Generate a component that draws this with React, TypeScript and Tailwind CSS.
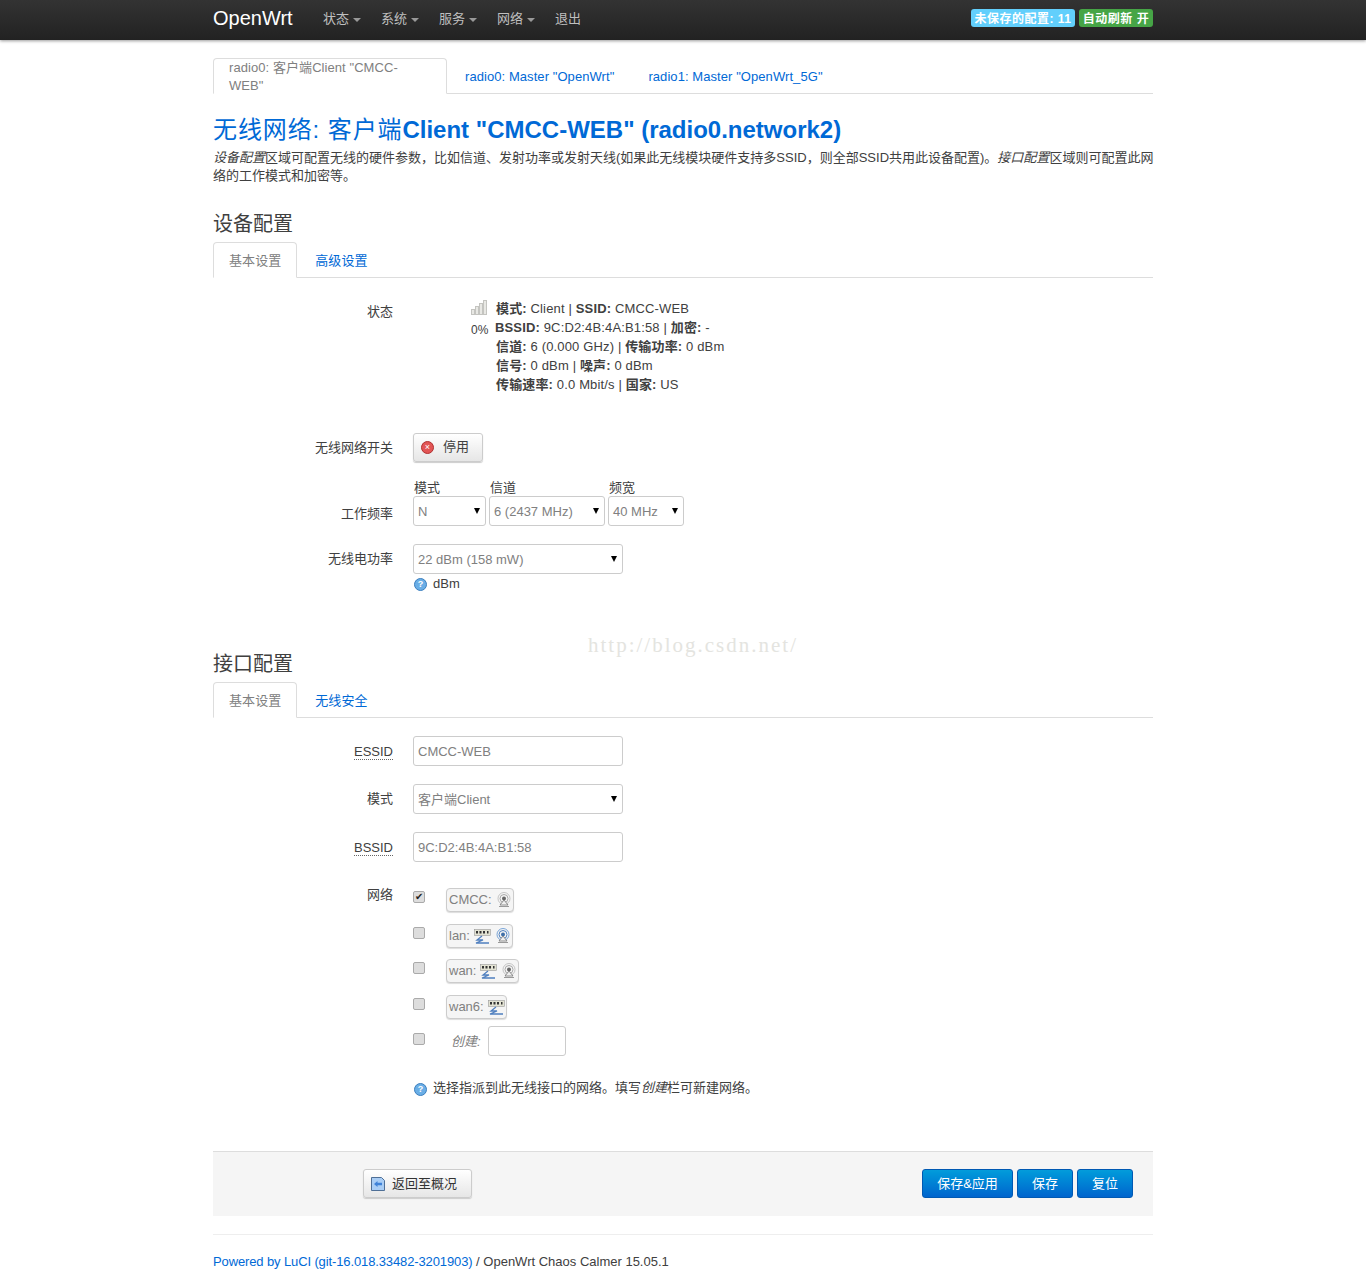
import type { ReactNode } from "react";

const FONT = "font-['Liberation_Sans','Noto_Sans_CJK_SC',sans-serif]";

function WifiIcon({ active }: { active?: boolean }) {
  const c = active ? "#7aa5d8" : "#c4c4c4";
  return (
    <svg width="16" height="16" viewBox="0 0 16 16" fill="none">
      <circle cx="8" cy="6.5" r="6" stroke={c} strokeWidth="1" />
      <circle cx="8" cy="6.5" r="4" stroke={active ? "#4f82c0" : "#a8a8a8"} strokeWidth="1" />
      <circle cx="8" cy="6.5" r="2" fill={active ? "#3f6fa8" : "#666"} />
      <path d="M8 8 L4 13 H12 Z" fill="#f0f0f0" stroke="#777" strokeWidth="0.8" />
      <path d="M3 14.5 H13" stroke="#999" strokeWidth="1" />
    </svg>
  );
}

function NetIcon() {
  return (
    <svg width="17" height="16" viewBox="0 0 17 16" fill="none">
      <rect x="0.5" y="1.5" width="16" height="6" fill="#e2e2d2" stroke="#999" strokeWidth="0.6" />
      <rect x="2" y="3" width="2" height="2.5" fill="#333" />
      <rect x="5.5" y="3" width="2" height="2.5" fill="#333" />
      <rect x="9" y="3" width="2" height="2.5" fill="#333" />
      <rect x="13" y="3" width="1.5" height="2.5" fill="#333" />
      <path d="M8 8 L3 12 H9 L2 15 H15" stroke="#4f7fbf" strokeWidth="1.3" />
    </svg>
  );
}

function HelpIcon() {
  return (
    <span className="flex h-[13px] w-[13px] shrink-0 items-center justify-center rounded-full border border-[#3b7fbf] bg-[#6aaee6] text-[9px] font-bold leading-none text-white">
      ?
    </span>
  );
}

function SignalIcon() {
  return (
    <svg width="17" height="15" viewBox="0 0 17 15" fill="none">
      <rect x="0.5" y="9.5" width="3" height="5" fill="#e8e8e4" stroke="#c4c4c0" />
      <rect x="4.5" y="6.5" width="3" height="8" fill="#e8e8e4" stroke="#c4c4c0" />
      <rect x="8.5" y="3.5" width="3" height="11" fill="#e8e8e4" stroke="#c4c4c0" />
      <rect x="12.5" y="0.5" width="3" height="14" fill="#e8e8e4" stroke="#c4c4c0" />
    </svg>
  );
}

function Caret() {
  return <span className="ml-1 mt-[2px] h-0 w-0 border-x-4 border-t-4 border-x-transparent border-t-[#999]" />;
}

function Tabs({ items, firstWidth }: { items: string[]; firstWidth?: string }) {
  return (
    <div className="flex h-[36px] border-b border-[#ddd] tracking-[0.07px]">
      {items.map((t, i) =>
        i === 0 ? (
          <div
            key={t}
            className={`-mb-px flex h-[36px] items-center rounded-t border border-[#ddd] border-b-white bg-white px-[15px] pt-[2px] text-[#808080] ${firstWidth ?? ""}`}
          >
            {t}
          </div>
        ) : (
          <div key={t} className="ml-[2px] flex items-center px-4 pt-[2px] text-[#0069d6]">
            {t}
          </div>
        ),
      )}
    </div>
  );
}

function Row({ label, className, children }: { label: ReactNode; className?: string; children: ReactNode }) {
  return (
    <div className={`flex ${className ?? ""}`}>
      <div className="w-[180px] shrink-0 text-right">{label}</div>
      <div className="ml-[20px] min-w-0 flex-1">{children}</div>
    </div>
  );
}

function FakeSelect({ value, className }: { value: string; className: string }) {
  return (
    <div
      className={`flex h-[30px] items-center justify-between rounded-[3px] border border-[#ccc] bg-white pl-1 pr-[5px] text-[#808080] ${className}`}
    >
      <span className="relative top-px">{value}</span>
      <span className="h-0 w-0 border-x-[3.5px] border-t-[6px] border-x-transparent border-t-black" />
    </div>
  );
}

function TextBox({ value }: { value: string }) {
  return (
    <input
      readOnly
      value={value}
      className="block h-[30px] w-[210px] rounded-[3px] border border-[#ccc] bg-white px-1 text-[#808080]"
    />
  );
}

function Check({ on }: { on?: boolean }) {
  return (
    <span className="flex h-[12px] w-[12px] items-center justify-center rounded-[2px] border border-[#aaa] bg-[#ddd] text-[10px] leading-none text-[#222]">
      {on ? "✔" : ""}
    </span>
  );
}

function NetLabel({ name, children, className }: { name: string; children: ReactNode; className?: string }) {
  return (
    <div className={`flex items-start ${className ?? ""}`}>
      <div className="mt-[3px]">
        <Check on={name === "CMCC"} />
      </div>
      <div className="ml-[21px] flex h-[24px] items-center gap-[4px] rounded-[4px] border border-[#ccc] bg-[#f5f5f5] pl-[2px] pr-px text-[#808080] shadow-[0_1px_1px_#ddd]">
        <span className="-mt-px">{name}:</span>
        {children}
      </div>
    </div>
  );
}

function BlueButton({ children, className }: { children: ReactNode; className: string }) {
  return (
    <div
      className={`flex h-[29px] items-center justify-center rounded-[3px] border border-[#0059b3] bg-gradient-to-b from-[#049cdb] to-[#0064cd] text-white ${className}`}
    >
      {children}
    </div>
  );
}

export default function App() {
  return (
    <div className={`${FONT} relative min-h-[1275px] bg-white text-[13px] leading-[18px] text-[#404040]`}>
      {/* Top bar */}
      <div className="h-[40px] bg-gradient-to-b from-[#333] to-[#222] shadow-[0_1px_3px_rgba(0,0,0,0.4)]">
        <div className="mx-auto flex h-[40px] w-[940px] items-center">
          <div className="w-[110px] pb-[5px] text-xl text-white">OpenWrt</div>
          <nav className="flex gap-[20px] pb-[3px] text-[#bfbfbf]">
            {["状态", "系统", "服务", "网络"].map((t) => (
              <div key={t} className="flex w-[38px] items-center">
                {t}
                <Caret />
              </div>
            ))}
            <div>退出</div>
          </nav>
          <div className="ml-auto flex gap-1 pb-[4px] text-xs font-bold tracking-[0.5px] text-white">
            <span className="flex h-[18px] w-[104px] items-center justify-center rounded-[3px] bg-[#62cffc] pt-px">未保存的配置: 11</span>
            <span className="flex h-[18px] w-[74px] items-center justify-center rounded-[3px] bg-[#46a546] pt-px">自动刷新 开</span>
          </div>
        </div>
      </div>

      <div className="mx-auto w-[940px] pt-[18px]">
        <Tabs
          firstWidth="w-[234px]"
          items={['radio0: 客户端Client "CMCC-WEB"', 'radio0: Master "OpenWrt"', 'radio1: Master "OpenWrt_5G"']}
        />

        <h2 className="mt-[21px] text-2xl font-bold leading-[30px] text-[#0069d6]">
          <span className="font-normal tracking-[0.9px]">无线网络:&nbsp;客户端</span>Client "CMCC-WEB" (radio0.network2)
        </h2>
        <p className="-mr-[2px] mt-[4px]">
          <em>设备配置</em>区域可配置无线的硬件参数，比如信道、发射功率或发射天线(如果此无线模块硬件支持多SSID，则全部SSID共用此设备配置)。<em>接口配置</em>区域则可配置此网络的工作模式和加密等。
        </p>

        {/* Device config */}
        <h3 className="mt-[24px] text-xl leading-[30px]">设备配置</h3>
        <div className="mt-[3px]">
          <Tabs items={["基本设置", "高级设置"]} />
        </div>

        <Row label={<span className="relative top-[1px]">状态</span>} className="mt-[24px]">
          <div className="ml-[58px] flex">
            <div className="w-[25px] shrink-0 text-xs">
              <div className="-mt-[2px]">
                <SignalIcon />
              </div>
              <div className="mt-[7px]">0%</div>
            </div>
            <div className="-mt-[3px] leading-[19px] tracking-[0.15px]">
              <div><b>模式:</b> Client | <b>SSID:</b> CMCC-WEB</div>
              <div className="-ml-px"><b>BSSID:</b> 9C:D2:4B:4A:B1:58 | <b>加密:</b> -</div>
              <div><b>信道:</b> 6 (0.000 GHz) | <b>传输功率:</b> 0 dBm</div>
              <div><b>信号:</b> 0 dBm | <b>噪声:</b> 0 dBm</div>
              <div><b>传输速率:</b> 0.0 Mbit/s | <b>国家:</b> US</div>
            </div>
          </div>
        </Row>

        <Row label={<span className="relative top-[6px]">无线网络开关</span>} className="mt-[39px]">
          <div className="flex h-[29px] w-[70px] items-center rounded-[3px] border border-[#ccc] bg-gradient-to-b from-white to-[#e6e6e6] pb-px pl-[7px] shadow-[0_1px_1px_#ccc]">
            <span className="flex h-[13px] w-[13px] items-center justify-center rounded-full border border-[#b03030] bg-[#e25555] text-[9px] leading-none text-white">×</span>
            <span className="ml-[9px]">停用</span>
          </div>
        </Row>

        <Row label={<span className="relative top-[26px]">工作频率</span>} className="mt-[17px]">
          <div className="flex gap-[3px]">
            {[
              { l: "模式", v: "N", w: "w-[73px]" },
              { l: "信道", v: "6 (2437 MHz)", w: "w-[116px]" },
              { l: "频宽", v: "40 MHz", w: "w-[76px]" },
            ].map((s) => (
              <div key={s.l}>
                <div className="h-[17px] pl-px">{s.l}</div>
                <FakeSelect value={s.v} className={s.w} />
              </div>
            ))}
          </div>
        </Row>

        <Row label={<span className="relative top-[6px]">无线电功率</span>} className="mt-[18px]">
          <FakeSelect value="22 dBm (158 mW)" className="w-[210px]" />
          <div className="mt-[2px] flex items-center gap-[6px] pl-px">
            <HelpIcon />
            <span className="-mt-[1px]">dBm</span>
          </div>
        </Row>

        {/* Interface config */}
        <h3 className="mt-[56px] text-xl leading-[30px]">接口配置</h3>
        <div className="mt-[3px]">
          <Tabs items={["基本设置", "无线安全"]} />
        </div>

        <Row label={<span className="relative top-[7px] border-b border-dotted border-[#666]">ESSID</span>} className="mt-[18px]">
          <TextBox value="CMCC-WEB" />
        </Row>
        <Row label={<span className="relative top-[6px]">模式</span>} className="mt-[18px]">
          <FakeSelect value="客户端Client" className="w-[210px]" />
        </Row>
        <Row label={<span className="relative top-[7px] border-b border-dotted border-[#666]">BSSID</span>} className="mt-[18px]">
          <TextBox value="9C:D2:4B:4A:B1:58" />
        </Row>

        <Row label={<span className="relative top-[-2px]">网络</span>} className="mt-[26px]">
          <div className="flex flex-col gap-[12px]">
            <NetLabel name="CMCC"><WifiIcon /></NetLabel>
            <NetLabel name="lan"><NetIcon /><WifiIcon active /></NetLabel>
            <NetLabel name="wan" className="-mt-px"><NetIcon /><WifiIcon /></NetLabel>
            <NetLabel name="wan6"><NetIcon /></NetLabel>
            <div className="-mt-[5px] flex items-start">
              <div className="mt-[7px]"><Check /></div>
              <em className="ml-[26px] mt-[7px] w-[37px] text-[#808080]">创建:</em>
              <input readOnly className="block h-[30px] w-[78px] rounded-[3px] border border-[#ccc] bg-white" />
            </div>
          </div>
          <div className="mt-[25px] flex items-center gap-[6px] pl-px">
            <HelpIcon />
            <span className="-mt-[2px]">选择指派到此无线接口的网络。填写<em>创建</em>栏可新建网络。</span>
          </div>
        </Row>

        {/* Actions */}
        <div className="mt-[54px] flex h-[65px] items-center border-t border-[#ddd] bg-[#f5f5f5] pb-px pl-[150px] pr-[20px]">
          <div className="flex h-[29px] w-[109px] items-center rounded-[3px] border border-[#ccc] bg-gradient-to-b from-white to-[#e6e6e6] pl-[7px] text-[#333] shadow-[0_1px_1px_#ccc]">
            <svg width="14" height="14" viewBox="0 0 14 14" fill="none">
              <path d="M0.5 0.5 H10.5 L13.5 3.5 V13.5 H0.5 Z" fill="#a9cdf5" stroke="#4f6f96" />
              <path d="M3 7 L6.5 4 V5.8 H11 V8.2 H6.5 V10 Z" fill="#3f82d8" />
            </svg>
            <span className="ml-[7px]">返回至概况</span>
          </div>
          <div className="ml-auto flex gap-1">
            <BlueButton className="w-[91px]">保存&amp;应用</BlueButton>
            <BlueButton className="w-[56px]">保存</BlueButton>
            <BlueButton className="w-[56px]">复位</BlueButton>
          </div>
        </div>

        {/* Footer */}
        <div className="mt-[18px] border-t border-[#eee] pt-[18px]">
          <span className="tracking-[-0.12px] text-[#0069d6]">Powered by LuCI (git-16.018.33482-3201903)</span> / OpenWrt Chaos Calmer 15.05.1
        </div>
      </div>

      {/* csdn watermark sits over the page */}
      <div className="absolute left-[588px] top-[636px] font-['Liberation_Serif',serif] text-[21px] tracking-[2px] text-[#e4e4e0]">
        http://blog.csdn.net/
      </div>
    </div>
  );
}
